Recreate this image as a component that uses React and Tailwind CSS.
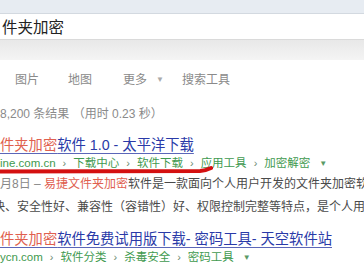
const font = { fontFamily: '"Liberation Sans", "Noto Sans CJK SC", sans-serif' };

function Result({ red, blue, url, crumbs }) {
    return (
        <div>
            <div className="h-[20px] leading-[20px] text-[14.3px] whitespace-nowrap underline decoration-[1px] underline-offset-[3px] decoration-[#5b66b8]">
                <span className="text-[#e0604f]">{red}</span>
                <span className="text-[#2a3aa8]">{blue}</span>
            </div>
            <div className="h-[16px] leading-[16px] text-[11.5px] whitespace-nowrap text-[#3f9a4f]">
                {url}
                {crumbs.map((c) => (
                    <span key={c}>
                        <span className="text-[#6a8a70] mx-[7px] text-[11px]">›</span>
                        {c}
                    </span>
                ))}
                <span className="ml-[9px] text-[8px] text-[#5a9a66] align-middle">▼</span>
            </div>
        </div>
    );
}

export default function App() {
    return (
        <div className="w-[364px] h-[273px] overflow-hidden relative bg-white" style={font}>
            <div className="h-[14px] bg-[#e7ecf2] border-b border-[#d3d9e0]"></div>
            <div className="h-[26px] flex items-center pl-[2px] pt-[2px] text-[15.5px] text-[#222] border-b border-[#dadada] whitespace-nowrap">
                件夹加密
            </div>
            <div className="h-[20px] bg-gradient-to-b from-[#e8e8e8] to-[#f4f4f4]"></div>

            <div className="mt-[10px] h-[20px] leading-[20px] flex text-[12px] text-[#8a8a8a] whitespace-nowrap">
                <span className="ml-[15px]">图片</span>
                <span className="ml-[29px]">地图</span>
                <span className="ml-[31px]">更多</span>
                <span className="ml-[9px] text-[8px] text-[#aaa]">▼</span>
                <span className="ml-[18px]">搜索工具</span>
            </div>

            <div className="mt-[14px] h-[20px] leading-[20px] text-[12px] text-[#8a8a8a] whitespace-nowrap">
                8,200 条结果 （用时 0.23 秒）
            </div>

            <div className="mt-[11px]">
                <Result
                    red="件夹加密"
                    blue="软件 1.0 - 太平洋下载"
                    url="ine.com.cn"
                    crumbs={["下载中心", "软件下载", "应用工具", "加密解密"]}
                />
            </div>

            <div className="mt-[2px] text-[12px] leading-[23px] text-[#4a4a4a] whitespace-nowrap">
                <div>
                    <span className="text-[#888]">月8日 – </span>
                    <span className="text-[#e0604f]">易捷文件夹加密</span>
                    软件是一款面向个人用户开发的文件夹加密软件
                </div>
                <div className="-ml-[7px]">快、安全性好、兼容性（容错性）好、权限控制完整等特点，是个人用户</div>
            </div>

            <div className="mt-[10px]">
                <Result
                    red="件夹加密"
                    blue="软件免费试用版下载- 密码工具- 天空软件站"
                    url="ycn.com"
                    crumbs={["软件分类", "杀毒安全", "密码工具"]}
                />
            </div>

            <svg className="absolute left-0 top-[164px]" width="220" height="14" viewBox="0 0 220 14">
                <path
                    d="M0 7.5 C60 7, 140 7.5, 200 7 C205 6.8, 208 5.5, 211 4"
                    fill="none"
                    stroke="#d41010"
                    strokeWidth="4"
                    strokeLinecap="round"
                />
            </svg>
        </div>
    );
}
